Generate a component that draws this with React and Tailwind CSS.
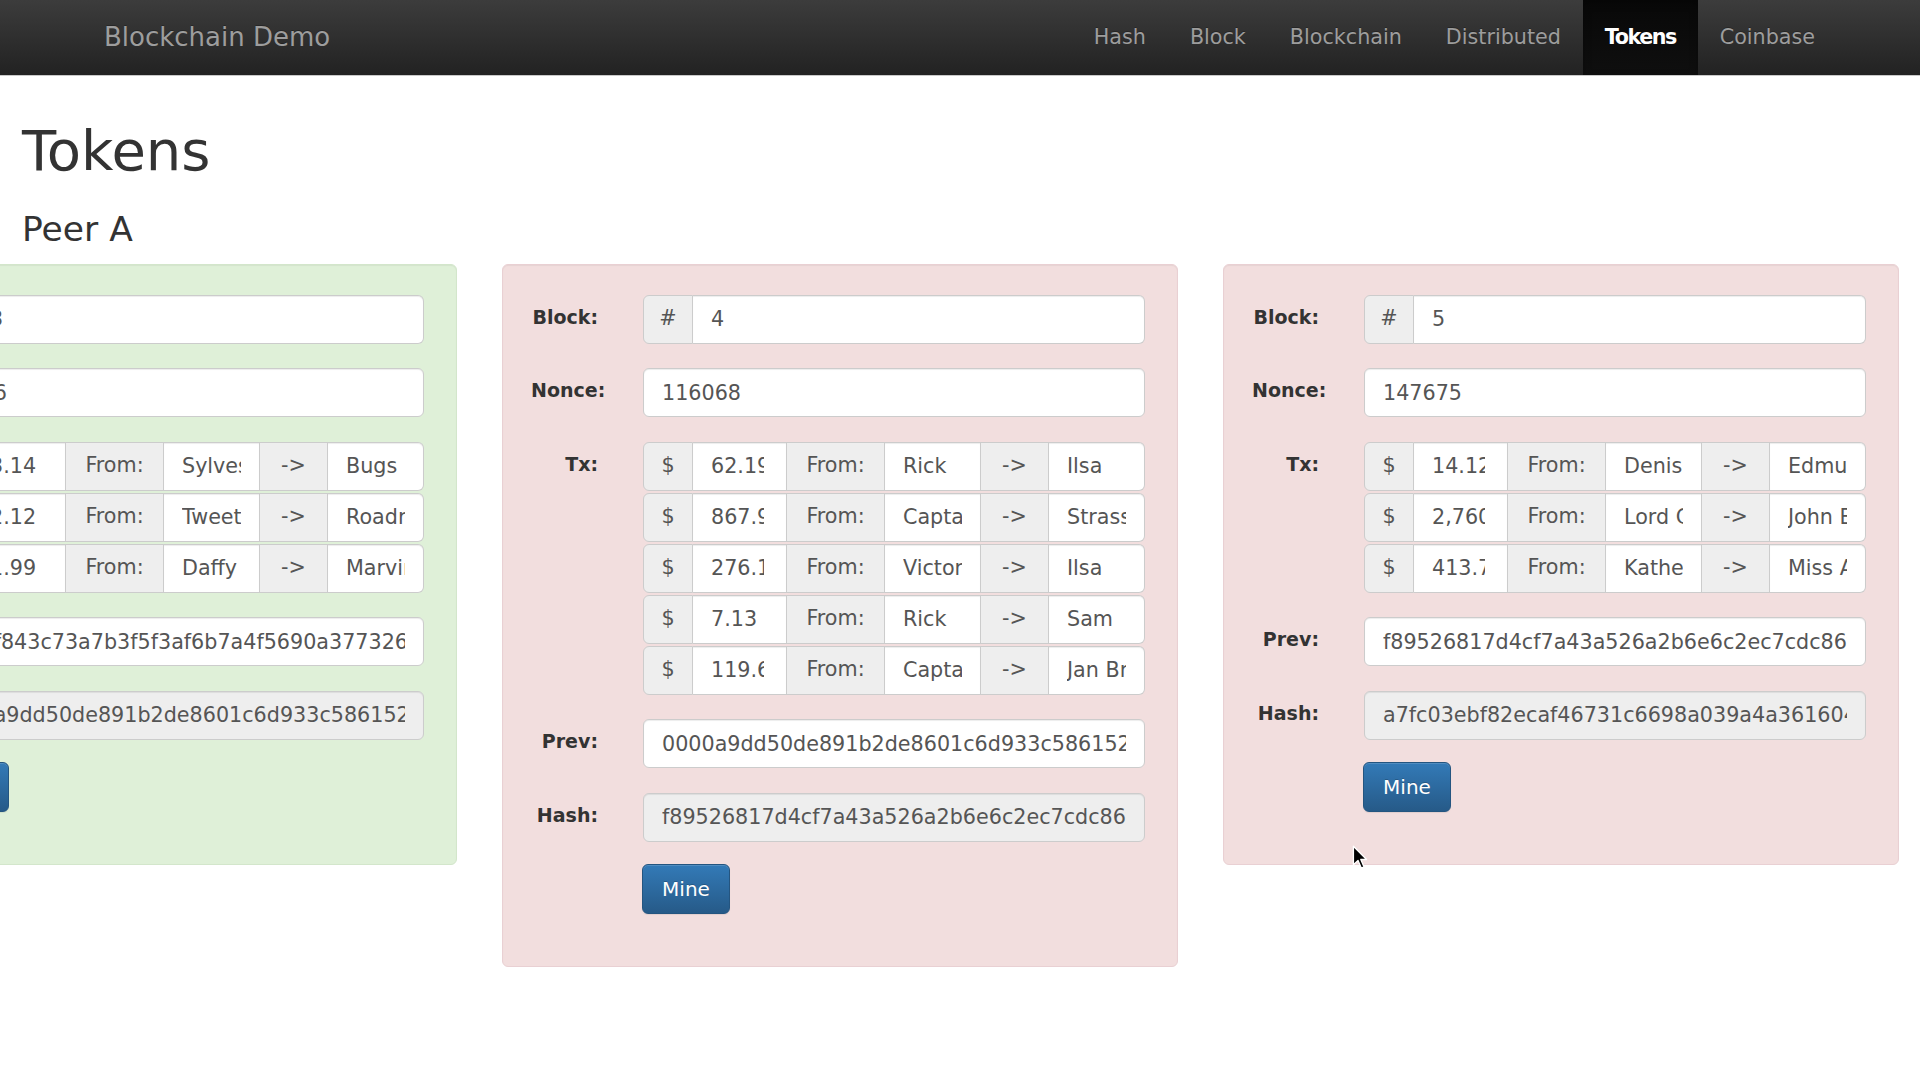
import React from "react";

const NAV = ["Hash", "Block", "Blockchain", "Distributed", "Tokens", "Coinbase"];

const panels = [
  {
    tone: "green",
    ml: true,
    block: "3",
    nonce: "35886",
    tx: [
      ["3.14", "Sylvester", "Bugs"],
      ["2.12", "Tweety", "Roadrunner"],
      ["1.99", "Daffy", "Marvin"],
    ],
    prev: "0000f843c73a7b3f5f3af6b7a4f5690a3773264b1e0d9c2a",
    hash: "0000a9dd50de891b2de8601c6d933c586152fe3a1b07c4d2",
  },
  {
    tone: "red",
    block: "4",
    nonce: "116068",
    tx: [
      ["62.19", "Rick", "Ilsa"],
      ["867.95", "Captain Renault", "Strasser"],
      ["276.13", "Victor Laszlo", "Ilsa"],
      ["7.13", "Rick", "Sam"],
      ["119.60", "Captain Renault", "Jan Brandel"],
    ],
    prev: "0000a9dd50de891b2de8601c6d933c586152fe3a1b07c4d2",
    hash: "f89526817d4cf7a43a526a2b6e6c2ec7cdc86f1e42b9a05c",
  },
  {
    tone: "red",
    block: "5",
    nonce: "147675",
    tx: [
      ["14.12", "Denis", "Edmund"],
      ["2,760.00", "Lord Crawley", "John Bates"],
      ["413.75", "Katherine", "Miss Anna"],
    ],
    prev: "f89526817d4cf7a43a526a2b6e6c2ec7cdc86f1e42b9a05c",
    hash: "a7fc03ebf82ecaf46731c6698a039a4a361604d8e2b17f39",
  },
];

const inputCls =
  "min-w-0 h-[49px] bg-white pl-[18px] text-[20.7px] text-[#555] outline-none shadow-[inset_0_1px_1px_rgba(0,0,0,0.075)] border-[#ccc]";
const addonCls =
  "shrink-0 h-[49px] flex items-center justify-center bg-[#eee] text-[20.7px] text-[#555] border-[#ccc]";

function Label({ children }) {
  return (
    <div className="w-[67px] shrink-0 h-[49px] leading-[44px] text-right whitespace-nowrap font-bold text-[19px] text-[#333]">
      {children}
    </div>
  );
}

function TxRow({ amount, from, to }) {
  return (
    <div className="flex h-[49px]">
      <span className={addonCls + " w-[50px] border rounded-l-[6px]"}>$</span>
      <input readOnly value={amount} className={inputCls + " pr-[22px] w-[94px] border-y border-r"} />
      <span className={addonCls + " w-[98px] border-y border-r"}>From:</span>
      <input readOnly value={from} className={inputCls + " pr-[18px] w-[96px] border-y border-r"} />
      <span className={addonCls + " w-[68px] border-y border-r"}>-&gt;</span>
      <input readOnly value={to} className={inputCls + " pr-[18px] w-[96px] border-y border-r rounded-r-[6px]"} />
    </div>
  );
}

function Panel({ p }) {
  const toneCls =
    p.tone === "green"
      ? "bg-[#dff0d8] border-[#d3e6cb]"
      : "bg-[#f2dede] border-[#e9d0d3]";
  return (
    <div
      className={
        "w-[676px] shrink-0 rounded-[6px] border pt-[30px] pb-[52px] pl-[28px] pr-[32px] shadow-[inset_0_1px_1px_rgba(0,0,0,0.05)] " +
        toneCls +
        (p.ml ? " ml-[-219px]" : "")
      }
    >
      <div className="flex flex-col gap-[24.5px]">
        <div className="flex">
          <Label>Block:</Label>
          <div className="ml-[45px] w-[502px] flex">
            <span className={addonCls + " w-[50px] border rounded-l-[6px]"}>#</span>
            <input
              readOnly
              value={p.block}
              className={inputCls + " pr-[18px] flex-1 border-y border-r rounded-r-[6px]"}
            />
          </div>
        </div>
        <div className="flex">
          <Label>Nonce:</Label>
          <input
            readOnly
            value={p.nonce}
            className={inputCls + " pr-[18px] ml-[45px] w-[502px] border rounded-[6px]"}
          />
        </div>
        <div className="flex">
          <Label>Tx:</Label>
          <div className="ml-[45px] w-[502px] flex flex-col gap-[2px]">
            {p.tx.map((t, i) => (
              <TxRow key={i} amount={t[0]} from={t[1]} to={t[2]} />
            ))}
          </div>
        </div>
        <div className="flex">
          <Label>Prev:</Label>
          <input
            readOnly
            value={p.prev}
            className={inputCls + " pr-[18px] ml-[45px] w-[502px] border rounded-[6px]"}
          />
        </div>
        <div className="flex">
          <Label>Hash:</Label>
          <input
            readOnly
            value={p.hash}
            className={inputCls + " pr-[18px] ml-[45px] w-[502px] border rounded-[6px] !bg-[#eee]"}
          />
        </div>
      </div>
      <div className="mt-[22px] ml-[111px]">
        <button className="w-[88px] h-[50px] rounded-[6px] border border-[#245580] bg-[linear-gradient(to_bottom,#337ab7,#265a88)] text-white text-[20px] [text-shadow:0_-1px_0_rgba(0,0,0,0.2)] shadow-[inset_0_1px_0_rgba(255,255,255,0.15),0_1px_1px_rgba(0,0,0,0.075)]">
          Mine
        </button>
      </div>
    </div>
  );
}

export default function App() {
  return (
    <div className="relative w-[1920px] h-[1080px] overflow-hidden bg-white font-['DejaVu_Sans',sans-serif]">
      <div className="h-[76px] border-b border-[#c9c9c9] bg-[linear-gradient(to_bottom,#3c3c3c,#222)] flex items-stretch justify-between px-[83px]">
        <div className="px-[21px] flex items-center text-[26px] text-[#9d9d9d] [text-shadow:0_-1px_0_rgba(0,0,0,0.25)]">
          Blockchain Demo
        </div>
        <div className="flex items-stretch">
          {NAV.map((n) =>
            n === "Tokens" ? (
              <div
                key={n}
                className="px-[22px] flex items-center text-[20.7px] font-bold tracking-[-1.5px] text-white bg-[linear-gradient(to_bottom,#080808,#0f0f0f)] shadow-[inset_0_3px_9px_rgba(0,0,0,0.25)]"
              >
                {n}
              </div>
            ) : (
              <div
                key={n}
                className="px-[22px] flex items-center text-[20.7px] text-[#9d9d9d] [text-shadow:0_-1px_0_rgba(0,0,0,0.25)]"
              >
                {n}
              </div>
            )
          )}
        </div>
      </div>

      <div className="pl-[22px]">
        <h1 className="mt-[46px] text-[56px] leading-[57px] text-[#333]">Tokens</h1>
        <h3 className="mt-[31.5px] text-[34.5px] leading-[37px] text-[#333]">Peer A</h3>
      </div>

      <div className="mt-[16px] flex items-start gap-[45px]">
        {panels.map((p, i) => (
          <Panel key={i} p={p} />
        ))}
      </div>

      <svg
        className="absolute left-[1352px] top-[845px]"
        width="16"
        height="25"
        viewBox="0 0 12 19"
      >
        <path
          d="M1 1 L1 15 L4.5 11.8 L7 17.5 L9 16.6 L6.6 11 L11 11 Z"
          fill="#000"
          stroke="#fff"
          strokeWidth="1"
          strokeLinejoin="round"
        />
      </svg>
    </div>
  );
}
